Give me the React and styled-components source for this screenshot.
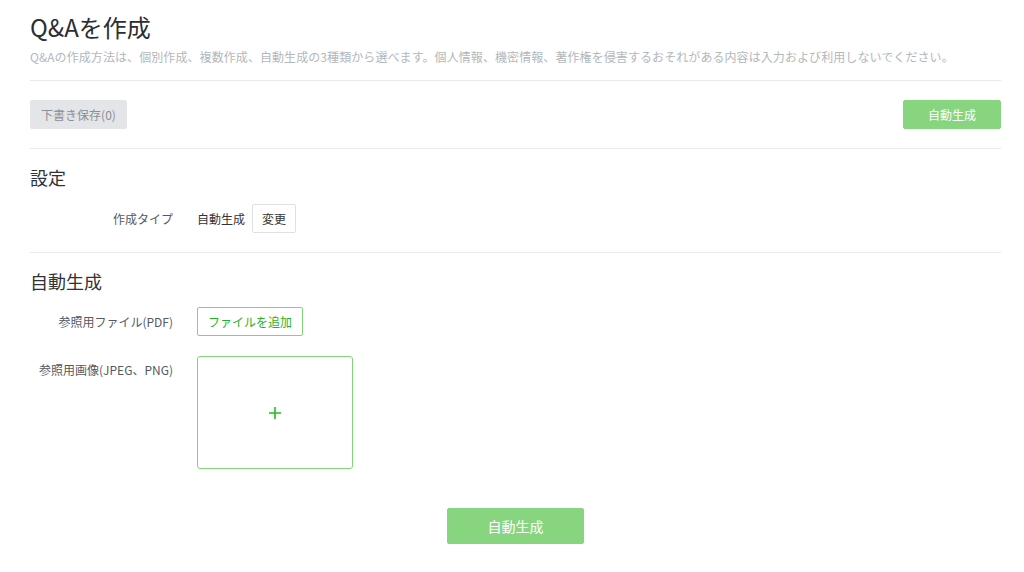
import styled, { createGlobalStyle } from "styled-components";

const GlobalStyle = createGlobalStyle`
  body {
    margin: 0;
    background: #fff;
    font-family: "Noto Sans CJK JP", "Noto Sans", sans-serif;
    color: #333;
  }
`;

const Page = styled.div`
  padding: 0 23px 0 30px;
`;

const Header = styled.header`
  padding-top: 10px;
  padding-bottom: 14px;
  border-bottom: 1px solid #e8e9eb;
`;

const Title = styled.h1`
  margin: 0;
  font-size: 24px;
  font-weight: 400;
  line-height: 34px;
  color: #2b2f33;
`;

const Lead = styled.p`
  margin: 4px 0 0;
  font-size: 12px;
  line-height: 18px;
  letter-spacing: 0.08px;
  color: #b3b7bc;
`;

const Toolbar = styled.div`
  display: flex;
  justify-content: space-between;
  align-items: center;
  padding: 19px 0 19px;
  border-bottom: 1px solid #e8e9eb;
`;

const Button = styled.button`
  height: 29px;
  padding: 0 ${(p) => p.$px || 10}px;
  min-width: ${(p) => p.$w || 0}px;
  font-family: inherit;
  font-size: 12px;
  border-radius: 2px;
  cursor: pointer;
  border: 1px solid
    ${(p) =>
      p.$variant === "primary"
        ? "#88d57f"
        : p.$variant === "outline"
        ? "#7fd677"
        : p.$variant === "muted"
        ? "#e4e5e8"
        : "#dfe0e3"};
  background: ${(p) =>
    p.$variant === "primary" ? "#88d57f" : p.$variant === "muted" ? "#e4e5e8" : "#fff"};
  color: ${(p) =>
    p.$variant === "primary"
      ? "#fff"
      : p.$variant === "outline"
      ? "#1fb31f"
      : p.$variant === "muted"
      ? "#8b8f94"
      : "#333"};
`;

const Section = styled.section`
  padding: 14px 0 19px;
  border-bottom: ${(p) => (p.$last ? "none" : "1px solid #e8e9eb")};
`;

const SectionTitle = styled.h2`
  margin: 0 0 ${(p) => p.$mb || 13}px;
  font-size: 18px;
  font-weight: 400;
  line-height: 28px;
  color: #333;
`;

const Field = styled.div`
  display: grid;
  grid-template-columns: 143px 1fr;
  column-gap: 24px;
  align-items: ${(p) => (p.$top ? "start" : "center")};
  margin-bottom: ${(p) => p.$mb || 0}px;
`;

const Label = styled.div`
  text-align: right;
  font-size: 12px;
  line-height: 18px;
  color: #555a5f;
  padding-top: ${(p) => (p.$top ? 5 : 0)}px;
`;

const Value = styled.div`
  display: flex;
  align-items: center;
  gap: 7px;
  font-size: 12px;
  color: #333;
`;

const UploadBox = styled.div`
  width: 154px;
  height: 111px;
  border: 1px solid #7fd677;
  border-radius: 3px;
  display: flex;
  align-items: center;
  justify-content: center;
`;

const Footer = styled.div`
  display: flex;
  justify-content: center;
  padding-top: 39px;
`;

const BigButton = styled(Button)`
  height: 36px;
  width: 137px;
  font-size: 14px;
`;

function Plus() {
  return (
    <svg width="14" height="14" viewBox="0 0 14 14">
      <path d="M7 1v12M1 7h12" stroke="#1fbf1f" strokeWidth="1.6" fill="none" />
    </svg>
  );
}

export default function App() {
  return (
    <>
      <GlobalStyle />
      <Page>
        <Header>
          <Title>Q&amp;Aを作成</Title>
          <Lead>
            Q&amp;Aの作成方法は、個別作成、複数作成、自動生成の3種類から選べます。個人情報、機密情報、著作権を侵害するおそれがある内容は入力および利用しないでください。
          </Lead>
        </Header>
        <Toolbar>
          <Button $variant="muted" $w={97}>下書き保存(0)</Button>
          <Button $variant="primary" $w={98}>自動生成</Button>
        </Toolbar>
        <Section>
          <SectionTitle>設定</SectionTitle>
          <Field>
            <Label>作成タイプ</Label>
            <Value>
              自動生成
              <Button $px={9}>変更</Button>
            </Value>
          </Field>
        </Section>
        <Section $last>
          <SectionTitle $mb={12}>自動生成</SectionTitle>
          <Field $mb={20}>
            <Label>参照用ファイル(PDF)</Label>
            <Value>
              <Button $variant="outline">ファイルを追加</Button>
            </Value>
          </Field>
          <Field $top>
            <Label $top>参照用画像(JPEG、PNG)</Label>
            <UploadBox>
              <Plus />
            </UploadBox>
          </Field>
          <Footer>
            <BigButton $variant="primary">自動生成</BigButton>
          </Footer>
        </Section>
      </Page>
    </>
  );
}
